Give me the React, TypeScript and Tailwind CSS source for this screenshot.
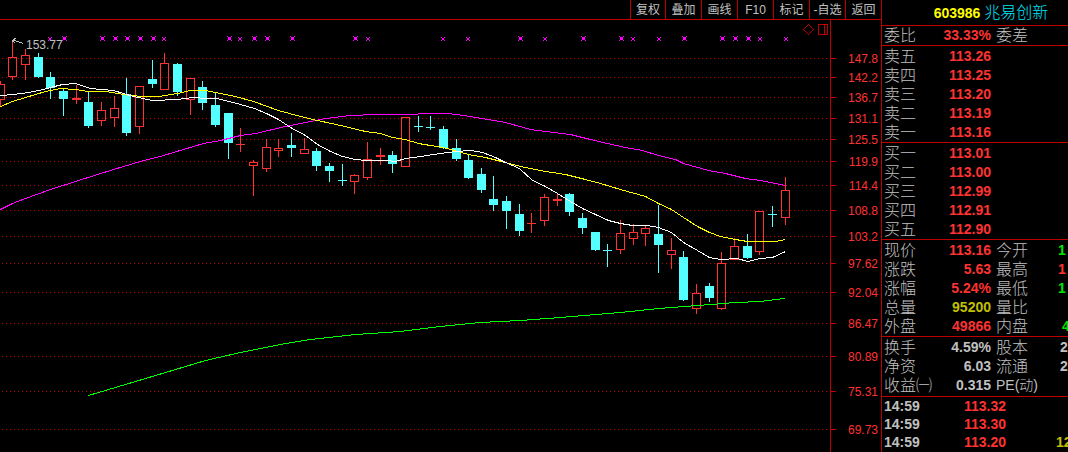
import React from 'react';

type Candle = [number, number, number, number, 'up' | 'down']

// high, body top, body bottom, low
const candles: Candle[] = [
    [81, 84, 100, 106, 'up'],
    [42, 57, 77, 80, 'up'],
    [49, 55, 65, 80, 'up'],
    [53, 57, 77, 78, 'down'],
    [72, 77, 88, 99, 'down'],
    [89, 91, 99, 116, 'down'],
    [85, 98, 100, 104, 'up'],
    [91, 102, 126, 128, 'down'],
    [102, 110, 121, 126, 'up'],
    [96, 108, 118, 127, 'up'],
    [78, 94, 133, 136, 'down'],
    [86, 86, 127, 134, 'up'],
    [60, 79, 84, 88, 'down'],
    [53, 63, 90, 90, 'up'],
    [63, 64, 92, 96, 'down'],
    [78, 78, 100, 115, 'up'],
    [81, 87, 103, 110, 'down'],
    [93, 105, 125, 127, 'down'],
    [113, 113, 143, 159, 'down'],
    [128, 144, 145, 152, 'up'],
    [160, 162, 166, 196, 'up'],
    [139, 147, 169, 172, 'up'],
    [139, 148, 151, 157, 'up'],
    [133, 145, 148, 157, 'down'],
    [138, 149, 154, 154, 'up'],
    [148, 151, 166, 171, 'down'],
    [163, 166, 171, 182, 'down'],
    [164, 180, 181, 186, 'down'],
    [174, 175, 182, 194, 'up'],
    [142, 159, 178, 180, 'up'],
    [148, 155, 157, 165, 'up'],
    [151, 155, 164, 173, 'down'],
    [117, 117, 167, 167, 'up'],
    [116, 126, 127, 132, 'down'],
    [116, 127, 128, 130, 'down'],
    [126, 129, 148, 149, 'down'],
    [139, 148, 159, 161, 'down'],
    [154, 160, 178, 179, 'down'],
    [168, 174, 190, 193, 'down'],
    [176, 199, 205, 211, 'down'],
    [196, 201, 211, 229, 'down'],
    [204, 214, 231, 236, 'down'],
    [213, 223, 224, 233, 'up'],
    [194, 197, 221, 226, 'up'],
    [194, 199, 201, 206, 'up'],
    [193, 194, 212, 216, 'down'],
    [213, 218, 228, 234, 'down'],
    [232, 232, 250, 251, 'down'],
    [244, 250, 251, 267, 'down'],
    [220, 233, 250, 254, 'up'],
    [224, 232, 239, 245, 'up'],
    [225, 228, 234, 246, 'up'],
    [205, 234, 245, 273, 'down'],
    [238, 250, 255, 269, 'up'],
    [251, 257, 300, 301, 'down'],
    [284, 293, 309, 314, 'up'],
    [283, 286, 298, 302, 'down'],
    [252, 263, 309, 310, 'up'],
    [238, 246, 260, 260, 'up'],
    [234, 246, 258, 259, 'down'],
    [211, 211, 252, 255, 'up'],
    [206, 214, 215, 227, 'down'],
    [177, 190, 218, 225, 'up'],
]

const levels: [number, string][] = [
    [58, '147.8'],
    [77, '142.2'],
    [97, '136.7'],
    [118, '131.1'],
    [139, '125.5'],
    [161, '119.9'],
    [185, '114.4'],
    [210, '108.8'],
    [236, '103.2'],
    [263, '97.62'],
    [292, '92.04'],
    [323, '86.47'],
    [356, '80.89'],
    [391, '75.31'],
    [429, '69.73'],
]

const averages = [
    {
        color: '#ff00ff',
        points: '0,209 12,203 25,198 50,189 75,181 113,169 140,161 163,155 203,143 220,140 240,135 255,133 285,126 315,120 325,118 350,115 375,114 410,114 425,113 448,113 470,116 505,122 530,129 545,131 570,134 590,139 607,143 625,147 642,150 658,155 675,159 683,163 708,170 725,173 745,178 760,180 770,182 785,185',
    },
    {
        color: '#ffff00',
        points: '0,106 12,101 25,97 45,91 60,88 75,89 88,91 105,91 130,95 143,96 158,96 177,93 190,90 205,90 215,92 235,96 253,101 278,110 300,116 317,120 340,125 365,131 380,133 392,137 405,139 418,143 430,145 443,147 468,154 485,157 505,162 520,166 545,171 565,174 585,179 600,183 620,189 645,196 658,203 671,209 683,217 697,226 709,232 720,236 735,239 747,241 775,241 785,239',
    },
    {
        color: '#ffffff',
        points: '0,95 13,94 28,92 43,89 50,87 62,84 75,83 90,88 113,90 133,96 152,100 177,99 192,97 207,98 217,98 240,104 254,108 266,113 278,119 290,127 305,135 317,144 330,151 342,156 355,159 365,160 385,160 395,161 405,158 420,156 440,153 455,151 470,150 482,152 495,157 505,162 519,168 532,180 545,186 557,193 570,201 582,208 595,214 608,220 620,223 632,225 646,225 658,227 671,232 683,242 697,250 709,257 720,259 737,258 747,261 760,258 772,257 785,251',
    },
    {
        color: '#00ff00',
        points: '88,395 125,384 165,372 205,360 240,352 280,344 310,339 355,334 400,331 440,326 480,322 520,320 560,317 620,312 658,308 684,306 710,304 735,302 760,301 775,299 785,298',
    },
]

const bigMarks = [64, 102, 115, 127, 140, 153, 229, 254, 267, 292, 355, 520, 583, 621, 684, 722, 735, 748]
const smallMarks = [50, 164, 240, 368, 443, 468, 545, 633, 659, 760, 786]

const Candlestick = ({candle, index}: { candle: Candle, index: number }) => {
    const [high, top, bottom, low, kind] = candle
    const x = Math.floor(index * 12.664 + 0.1)
    const color = kind === 'up' ? '#ff3232' : '#54ffff'
    const hollow = kind === 'up' && bottom - top > 2

    return (
        <g fill={color}>
            <rect x={x} y={high} width={1} height={top - high}/>
            <rect x={x} y={bottom} width={1} height={low - bottom}/>
            {hollow
                ? <rect x={x - 3.5} y={top + 0.5} width={8} height={bottom - top - 1} fill="none" stroke={color}/>
                : <rect x={x - 4} y={top} width={9} height={bottom - top}/>}
        </g>
    )
}

const Chart = () => (
    <svg viewBox="0 20 881 432" className="block w-full h-auto font-['Liberation_Sans',sans-serif]" shapeRendering="crispEdges">
        {levels.map(([y, label]) => (
            <g key={label}>
                <line x1={2} x2={829} y1={y + 0.5} y2={y + 0.5} stroke="#c00000" strokeDasharray="1 3"/>
                <rect x={831} y={y} width={5} height={1} fill="#c00000"/>
                <text x={878} y={y + 5} textAnchor="end" fill="#ff3232" className="text-[12px]">{label}</text>
            </g>
        ))}
        <rect x={830} y={20} width={1} height={432} fill="#c00000"/>

        {candles.map((candle, i) => <Candlestick key={i} candle={candle} index={i}/>)}

        {averages.map(line => (
            <polyline key={line.color} points={line.points} transform="translate(0.5 0.5)" fill="none" stroke={line.color}/>
        ))}

        <g fill="#ff00ff">
            {bigMarks.map(x => (
                <path key={x} d={`M${x - 1} 37h3v3h-3zM${x - 2} 36h1v1h-1zM${x + 2} 36h1v1h-1zM${x - 2} 40h1v1h-1zM${x + 2} 40h1v1h-1z`}/>
            ))}
            {smallMarks.map(x => (
                <path key={x} d={`M${x - 1} 38h2v2h-2zM${x - 2} 37h1v1h-1zM${x + 1} 37h1v1h-1zM${x - 2} 40h1v1h-1zM${x + 1} 40h1v1h-1z`}/>
            ))}
        </g>

        {/* highest price */}
        <path d="M12.5 42V39.5M12.5 40.5h2l3 1l3 1l3 1M13 39.5l3 -1M13 41l2 2" fill="none" stroke="#c0c0c0"/>
        <text x={26} y={49} fill="#c0c0c0" className="text-[12px]">153.77</text>

        <path d="M808.5 24.5l5 5l-5 5l-5 -5z" fill="none" stroke="#c00000"/>
        <path d="M818.5 24.5h9v10h-9zM824.5 24.5v10" fill="none" stroke="#c00000"/>
    </svg>
)

const tools = ['复权', '叠加', '画线', 'F10', '标记', '-自选', '返回']

const red = 'text-[#ff3232]'
const green = 'text-[#00e600]'
const silver = 'text-[#c0c0c0]'

type Row = [string, string, string, string?, string?, string?]

const sections: Row[][] = [
    [
        ['委比', '33.33%', red, '委差'],
    ],
    [
        ['卖五', '113.26', red],
        ['卖四', '113.25', red],
        ['卖三', '113.20', red],
        ['卖二', '113.19', red],
        ['卖一', '113.16', red],
    ],
    [
        ['买一', '113.01', red],
        ['买二', '113.00', red],
        ['买三', '112.99', red],
        ['买四', '112.91', red],
        ['买五', '112.90', red],
    ],
    [
        ['现价', '113.16', red, '今开', '1', green],
        ['涨跌', '5.63', red, '最高', '1', red],
        ['涨幅', '5.24%', red, '最低', '1', green],
        ['总量', '95200', 'text-[#c0c000]', '量比'],
        ['外盘', '49866', red, '内盘', '4', `${green} pl-1`],
    ],
    [
        ['换手', '4.59%', silver, '股本', '2', `${silver} pl-0.5`],
        ['净资', '6.03', silver, '流通', '2', `${silver} pl-0.5`],
        ['收益㈠', '0.315', silver, 'PE(动)', '', silver],
    ],
]

const ticks = [
    ['14:59', '113.32', ''],
    ['14:59', '113.30', ''],
    ['14:59', '113.20', '12'],
]

const Quote = () => (
    <aside className="w-[187px] shrink-0 overflow-hidden border-l border-[#c00000] whitespace-nowrap">
        <h1 className="flex h-[25px] items-center justify-center gap-1 pl-8 text-[#ffff00] text-sm font-bold">
            603986
            <span className="text-base font-light text-[#00e6ff]">兆易创新</span>
        </h1>
        {sections.map((rows, i) => (
            <div key={i} className={i === 0 ? 'border-t border-[#c00000]' : 'border-t border-[#c00000] pt-px last-of-type:pb-px'}>
                <table className="w-full table-fixed leading-[19px]">
                    <colgroup>
                        <col className="w-12"/>
                        <col className="w-[62px]"/>
                        <col className="w-[66px]"/>
                        <col/>
                    </colgroup>
                    <tbody>
                    {rows.map(([label, value, color, label2, value2, color2]) => (
                        <tr key={label} className="h-[19px]">
                            <th className="p-0 pl-0.5 text-left text-base/[19px] font-light">{label}</th>
                            <td className={`p-0 pr-px text-right text-sm/[19px] font-bold ${color}`}>{value}</td>
                            <th className={`p-0 pl-1 text-left font-light ${label2 === 'PE(动)' ? 'text-sm/[19px]' : 'text-base/[19px]'}`}>{label2}</th>
                            <td className={`p-0 text-sm/[19px] font-bold ${color2}`}>{value2}</td>
                        </tr>
                    ))}
                    </tbody>
                </table>
            </div>
        ))}
        <table className="w-full table-fixed border-t border-[#c00000] text-sm/[18px] font-bold">
            <tbody>
            {ticks.map(([time, price, volume]) => (
                <tr key={price}>
                    <td className="w-[82px] p-0 pl-0.5">{time}</td>
                    <td className={`w-[92px] p-0 ${red}`}>{price}</td>
                    <td className="p-0 text-[#c0c000]">{volume}</td>
                </tr>
            ))}
            </tbody>
        </table>
    </aside>
)

const App = () => {
    return (
        <div className="flex overflow-hidden bg-black text-[#c0c0c0] font-['Liberation_Sans','Noto_Sans_CJK_SC',sans-serif]">
            <main className="min-w-0 flex-1">
                <nav className="flex h-5 justify-end border-b border-[#c00000]">
                    {tools.map(tool => (
                        <button key={tool} type="button" className="w-9 first:w-[35px] border-l border-[#c00000] text-xs leading-none whitespace-nowrap">
                            {tool}
                        </button>
                    ))}
                </nav>
                <Chart/>
            </main>
            <Quote/>
        </div>
    )
}

export default App;
